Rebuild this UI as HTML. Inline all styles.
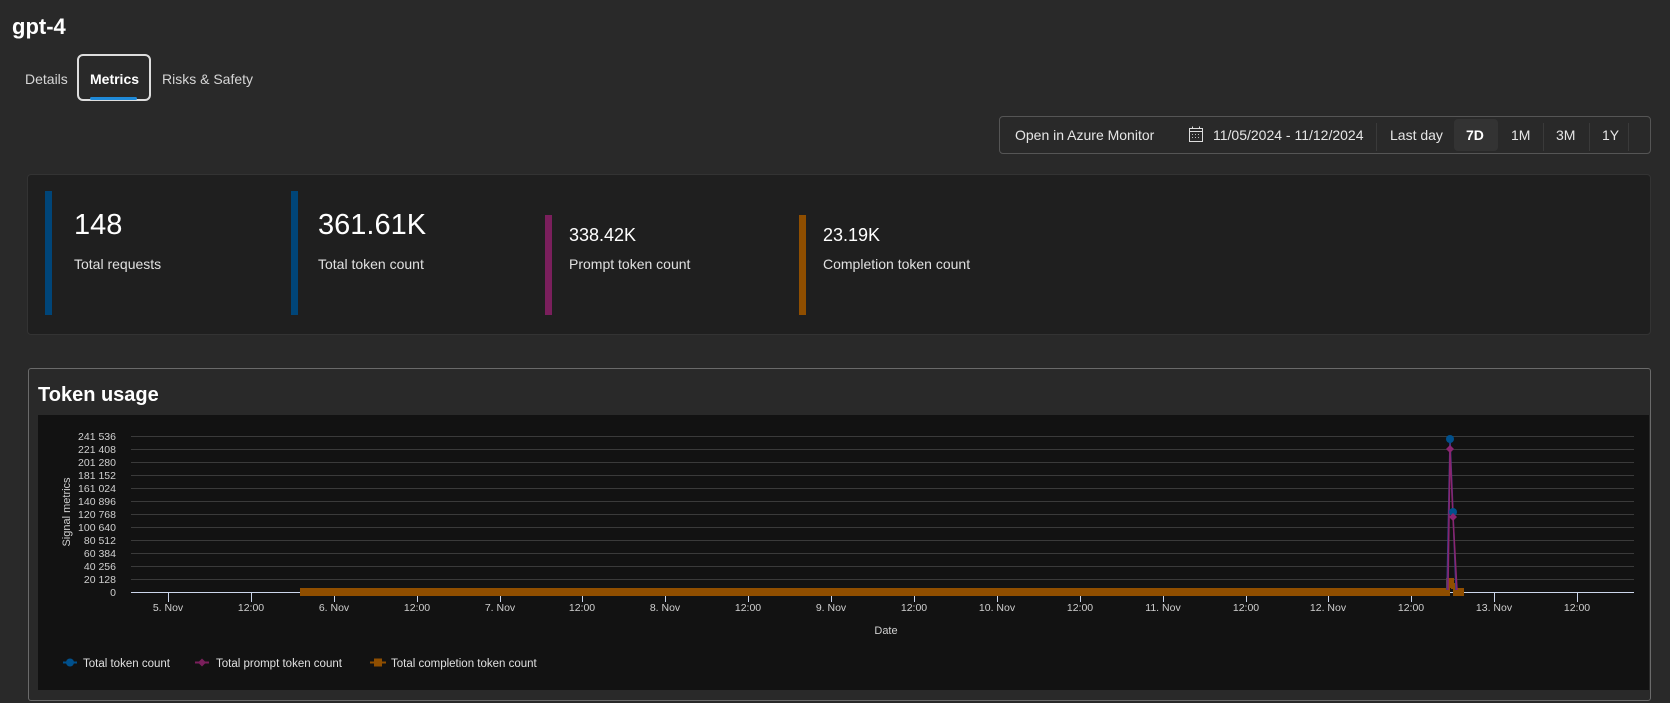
<!DOCTYPE html>
<html><head><meta charset="utf-8"><style>
*{margin:0;padding:0;box-sizing:border-box}
body{width:1670px;height:703px;background:#292929;font-family:"Segoe UI","Liberation Sans",sans-serif;color:#fff;position:relative;overflow:hidden}
.a{position:absolute;white-space:nowrap}
.tab{font-size:14px;color:#d6d6d6;top:71px}
.tb{font-size:14px;color:#e6e6e6;top:127px}
.sep{position:absolute;top:123px;width:1px;height:28px;background:#3a3a3a}
.bar{position:absolute;width:7px}
.big{font-size:29px;top:209px}
.lbl{font-size:14px;color:#e0e0e0;top:256px}
.mid{font-size:18px;top:225px}
</style></head><body>
<div class="a" style="left:12px;top:14px;font-size:22px;font-weight:600">gpt-4</div>
<div class="a tab" style="left:25px">Details</div>
<div class="a" style="left:77px;top:54px;width:74px;height:47px;border:2px solid #ddd;border-radius:6px"></div>
<div class="a tab" style="left:90px;color:#fff;font-weight:600">Metrics</div>
<div class="a" style="left:90px;top:97px;width:47px;height:3px;background:#1f8ad8;border-radius:2px"></div>
<div class="a tab" style="left:162px">Risks &amp; Safety</div>

<div class="a" style="left:999px;top:116px;width:652px;height:38px;border:1px solid #555;border-radius:4px"></div>
<div class="a tb" style="left:1015px">Open in Azure Monitor</div>
<svg class="a" style="left:1188px;top:126px" width="16" height="17" viewBox="0 0 16 17"><rect x="1.5" y="2.5" width="13" height="13" fill="none" stroke="#ddd"/><line x1="1.5" y1="5.5" x2="14.5" y2="5.5" stroke="#ddd"/><line x1="4.5" y1="0.5" x2="4.5" y2="3" stroke="#ddd"/><line x1="11.5" y1="0.5" x2="11.5" y2="3" stroke="#ddd"/><g fill="#bbb"><rect x="4" y="8" width="1" height="1"/><rect x="7" y="8" width="1" height="1"/><rect x="10" y="8" width="1" height="1"/><rect x="4" y="11" width="1" height="1"/><rect x="7" y="11" width="1" height="1"/><rect x="10" y="11" width="1" height="1"/></g></svg>
<div class="a tb" style="left:1213px">11/05/2024 - 11/12/2024</div>
<div class="sep" style="left:1376px"></div>
<div class="a tb" style="left:1390px">Last day</div>
<div class="a" style="left:1454px;top:119px;width:44px;height:32px;background:#333;border-radius:4px"></div>
<div class="a tb" style="left:1466px;font-weight:600;color:#fff">7D</div>
<div class="a tb" style="left:1511px">1M</div>
<div class="sep" style="left:1543px"></div>
<div class="a tb" style="left:1556px">3M</div>
<div class="sep" style="left:1589px"></div>
<div class="a tb" style="left:1602px">1Y</div>
<div class="sep" style="left:1628px"></div>

<div class="a" style="left:27px;top:174px;width:1624px;height:161px;background:#1f1f1f;border:1px solid #333;border-radius:4px"></div>
<div class="bar" style="left:45px;top:191px;height:124px;background:#004578"></div>
<div class="a big" style="left:74px">148</div>
<div class="a lbl" style="left:74px">Total requests</div>
<div class="bar" style="left:291px;top:191px;height:124px;background:#004578"></div>
<div class="a big" style="left:318px">361.61K</div>
<div class="a lbl" style="left:318px">Total token count</div>
<div class="bar" style="left:545px;top:215px;height:100px;background:#7a1f5c"></div>
<div class="a mid" style="left:569px">338.42K</div>
<div class="a lbl" style="left:569px">Prompt token count</div>
<div class="bar" style="left:799px;top:215px;height:100px;background:#8f4e00"></div>
<div class="a mid" style="left:823px">23.19K</div>
<div class="a lbl" style="left:823px">Completion token count</div>

<div class="a" style="left:28px;top:368px;width:1623px;height:333px;border:1px solid #6a6a6a;border-radius:3px;background:#292929"></div>
<div class="a" style="left:38px;top:384px;font-size:20px;font-weight:600">Token usage</div>
<svg class="a" style="left:38px;top:415px" width="1611" height="275" viewBox="38 415 1611 275" font-family="Segoe UI, Liberation Sans, sans-serif">
<rect x="38" y="415" width="1611" height="275" fill="#121212"/>
<g stroke="#3a3a3a" stroke-width="1">
<line x1="131" x2="1634" y1="436.5" y2="436.5"/><line x1="131" x2="1634" y1="449.5" y2="449.5"/><line x1="131" x2="1634" y1="462.5" y2="462.5"/><line x1="131" x2="1634" y1="475.5" y2="475.5"/><line x1="131" x2="1634" y1="488.5" y2="488.5"/><line x1="131" x2="1634" y1="501.5" y2="501.5"/><line x1="131" x2="1634" y1="514.5" y2="514.5"/><line x1="131" x2="1634" y1="527.5" y2="527.5"/><line x1="131" x2="1634" y1="540.5" y2="540.5"/><line x1="131" x2="1634" y1="553.5" y2="553.5"/><line x1="131" x2="1634" y1="566.5" y2="566.5"/><line x1="131" x2="1634" y1="579.5" y2="579.5"/>
</g>
<g fill="#d0d0d0" font-size="10.5" text-anchor="end">
<text x="116" y="440">241 536</text><text x="116" y="453">221 408</text><text x="116" y="466">201 280</text><text x="116" y="479">181 152</text><text x="116" y="492">161 024</text><text x="116" y="505">140 896</text><text x="116" y="518">120 768</text><text x="116" y="531">100 640</text><text x="116" y="544">80 512</text><text x="116" y="557">60 384</text><text x="116" y="570">40 256</text><text x="116" y="583">20 128</text><text x="116" y="596">0</text>
</g>
<text transform="translate(70,512) rotate(-90)" fill="#d0d0d0" font-size="11" text-anchor="middle">Signal metrics</text>
<line x1="131" x2="1634" y1="592.5" y2="592.5" stroke="#ccd6eb"/>
<g stroke="#ccd6eb">
<line x1="168.5" x2="168.5" y1="592" y2="602"/><line x1="251.5" x2="251.5" y1="592" y2="602"/><line x1="334.5" x2="334.5" y1="592" y2="602"/><line x1="417.5" x2="417.5" y1="592" y2="602"/><line x1="500.5" x2="500.5" y1="592" y2="602"/><line x1="582.5" x2="582.5" y1="592" y2="602"/><line x1="665.5" x2="665.5" y1="592" y2="602"/><line x1="748.5" x2="748.5" y1="592" y2="602"/><line x1="831.5" x2="831.5" y1="592" y2="602"/><line x1="914.5" x2="914.5" y1="592" y2="602"/><line x1="997.5" x2="997.5" y1="592" y2="602"/><line x1="1080.5" x2="1080.5" y1="592" y2="602"/><line x1="1163.5" x2="1163.5" y1="592" y2="602"/><line x1="1246.5" x2="1246.5" y1="592" y2="602"/><line x1="1328.5" x2="1328.5" y1="592" y2="602"/><line x1="1411.5" x2="1411.5" y1="592" y2="602"/><line x1="1494.5" x2="1494.5" y1="592" y2="602"/><line x1="1577.5" x2="1577.5" y1="592" y2="602"/>
</g>
<g fill="#d0d0d0" font-size="10.5" text-anchor="middle">
<text x="168" y="611">5. Nov</text><text x="251" y="611">12:00</text><text x="334" y="611">6. Nov</text><text x="417" y="611">12:00</text><text x="500" y="611">7. Nov</text><text x="582" y="611">12:00</text><text x="665" y="611">8. Nov</text><text x="748" y="611">12:00</text><text x="831" y="611">9. Nov</text><text x="914" y="611">12:00</text><text x="997" y="611">10. Nov</text><text x="1080" y="611">12:00</text><text x="1163" y="611">11. Nov</text><text x="1246" y="611">12:00</text><text x="1328" y="611">12. Nov</text><text x="1411" y="611">12:00</text><text x="1494" y="611">13. Nov</text><text x="1577" y="611">12:00</text>
</g>
<text x="886" y="634" fill="#d0d0d0" font-size="11" text-anchor="middle">Date</text>
<rect x="300" y="588" width="1150" height="8" fill="#8f4e00"/>
<rect x="1446" y="578" width="8" height="10" fill="#8f4e00"/>
<rect x="1451" y="583" width="6" height="6" fill="#8f4e00"/>
<rect x="1453" y="588" width="11" height="8" fill="#8f4e00"/>
<polyline points="1447,590 1450,439 1453,512 1456,590" fill="none" stroke="#3a3a8a" stroke-width="1.5"/>
<polyline points="1448,590 1450,449 1453,517 1457,590" fill="none" stroke="#8a2570" stroke-width="1.5"/>
<circle cx="1450" cy="439" r="4" fill="#00508c"/>
<circle cx="1453" cy="512" r="4" fill="#00508c"/>
<path d="M1450 445l4 4-4 4-4-4z" fill="#8a2570"/>
<path d="M1453 513l4 4-4 4-4-4z" fill="#8a2570"/>
<g font-size="11.5" fill="#e0e0e0">
<line x1="63" x2="77" y1="662.5" y2="662.5" stroke="#00508c" stroke-width="2"/><circle cx="70" cy="662.5" r="4" fill="#00508c"/><text x="83" y="667">Total token count</text>
<line x1="195" x2="209" y1="662.5" y2="662.5" stroke="#7a1f5c" stroke-width="2"/><path d="M202 658.5l4 4-4 4-4-4z" fill="#7a1f5c"/><text x="216" y="667">Total prompt token count</text>
<line x1="370" x2="386" y1="662.5" y2="662.5" stroke="#8f4e00" stroke-width="2"/><rect x="374" y="658.5" width="8" height="8" fill="#8f4e00"/><text x="391" y="667">Total completion token count</text>
</g>
</svg>
</body></html>
